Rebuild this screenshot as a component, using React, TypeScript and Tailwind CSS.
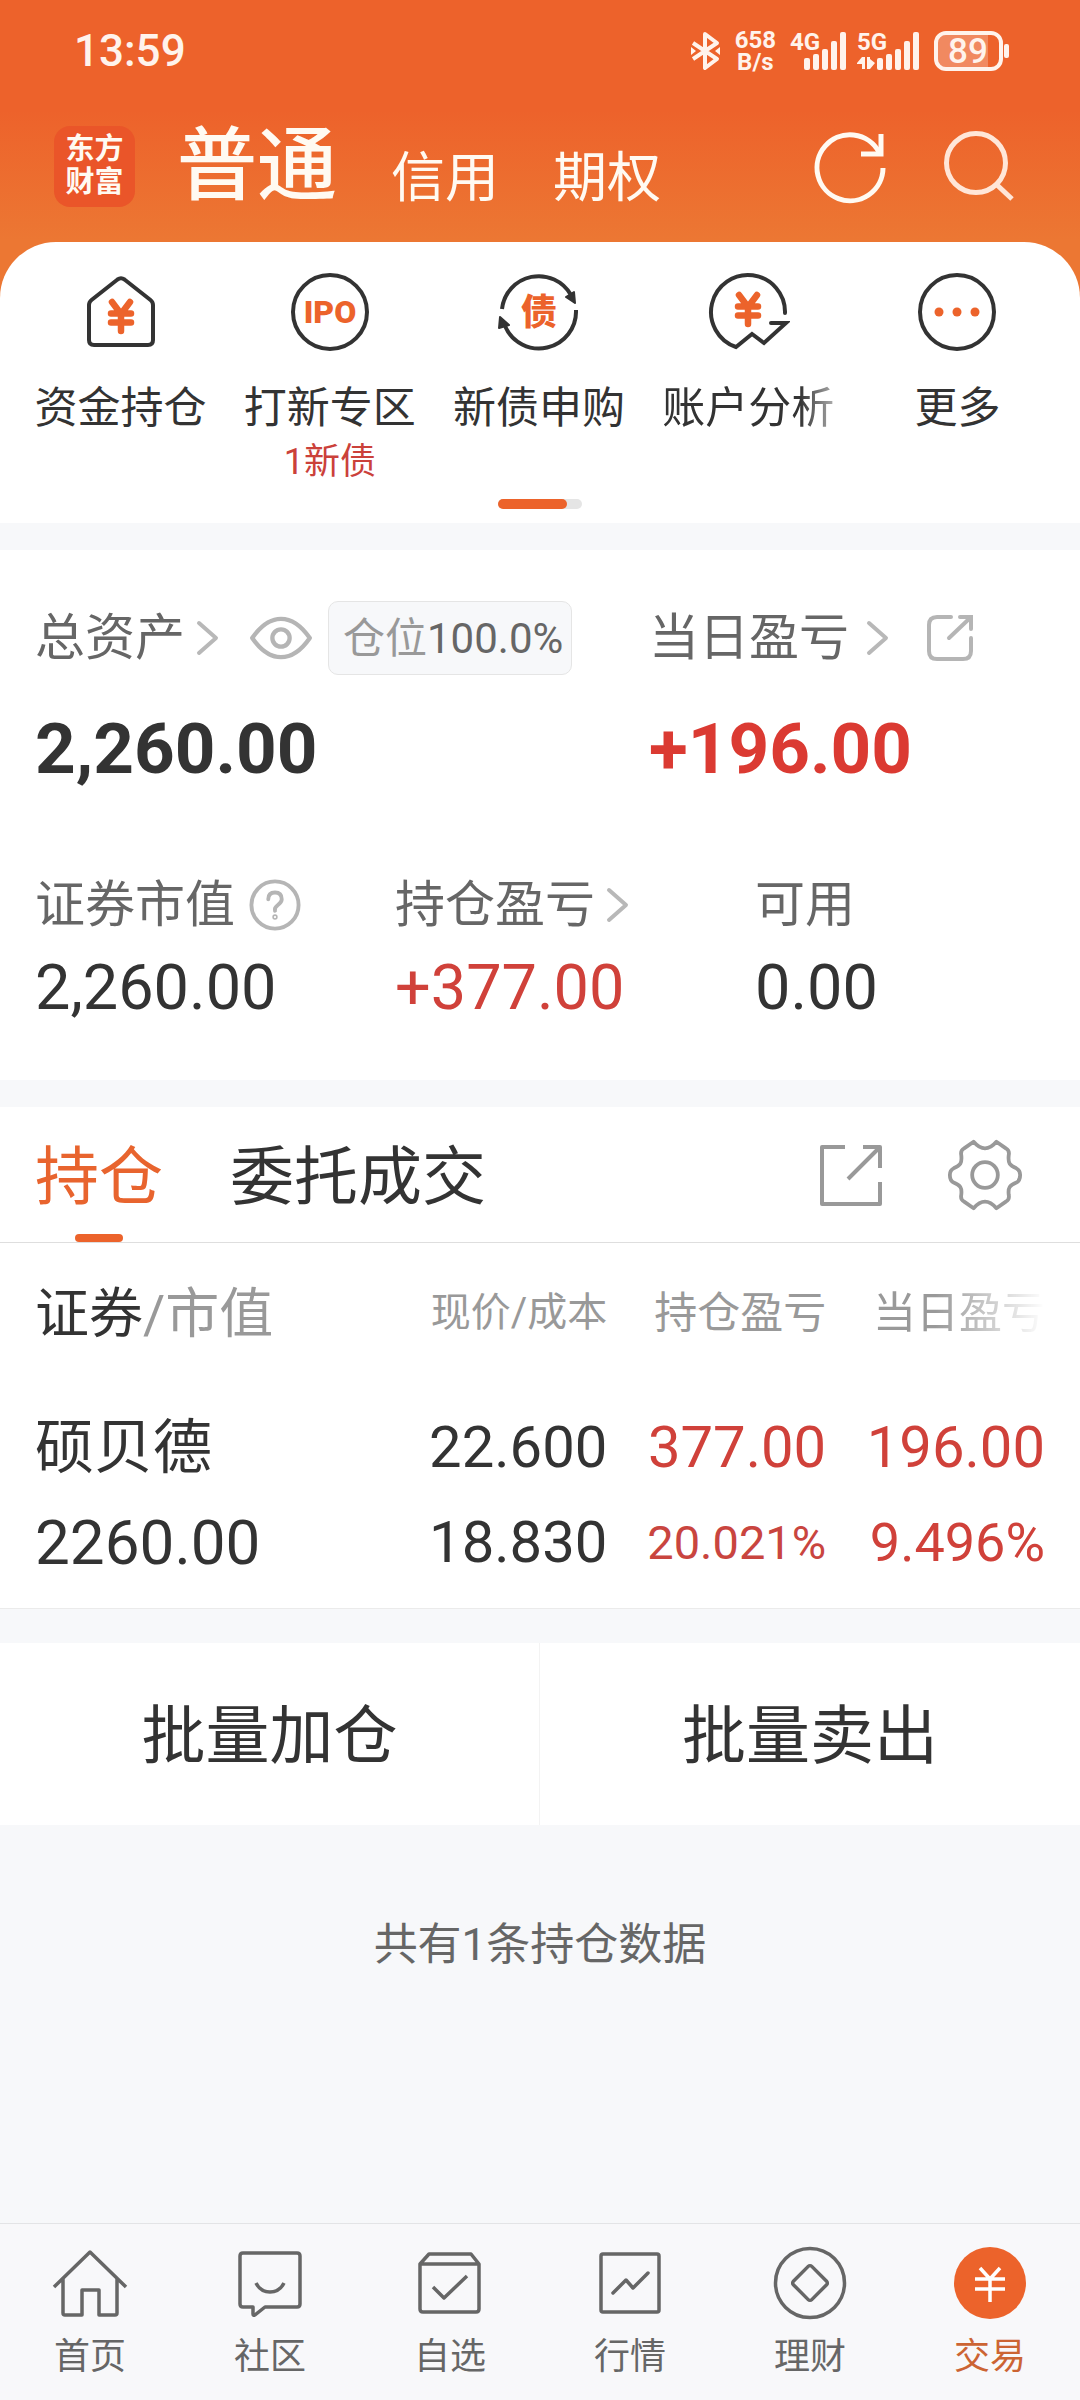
import type { ReactNode } from "react";

/* Shared icons */

const Yen = ({ y = 0 }: { y?: number }) => (
  <path
    d="M33 32L42 44L51 32M42 44V61M32 43.500H52M32 52.500H52"
    transform={`translate(0 ${y})`}
    stroke="#ec632b"
    strokeWidth="6.500"
    strokeLinecap="round"
    strokeLinejoin="round"
  />
);

const QuickSvg = ({ children }: { children: ReactNode }) => (
  <svg
    viewBox="0 0 84 84"
    className="size-[84px]"
    fill="none"
    stroke="#333"
    strokeWidth="4"
    aria-hidden="true"
  >
    {children}
  </svg>
);

const NavSvg = ({ children }: { children: ReactNode }) => (
  <svg
    viewBox="0 0 80 80"
    className="size-20"
    fill="none"
    stroke="#666"
    strokeWidth="3.500"
    strokeLinejoin="round"
    aria-hidden="true"
  >
    {children}
  </svg>
);

const Chevron = () => (
  <svg
    viewBox="0 0 24 40"
    className="h-10 w-6"
    fill="none"
    stroke="#b8b8b8"
    strokeWidth="4"
    strokeLinecap="round"
    strokeLinejoin="round"
    aria-hidden="true"
  >
    <path d="M4 5L21 20L4 35" />
  </svg>
);

const quickItems = [
  {
    label: "资金持仓",
    icon: (
      <QuickSvg>
        <path d="M10 35Q10 32 12.500 30L38.500 9.500Q42 7 45.500 9.500L71.500 30Q74 32 74 35V70Q74 75 69 75H15Q10 75 10 70Z" />
        <Yen />
      </QuickSvg>
    ),
  },
  {
    label: "打新专区",
    note: "1新债",
    icon: (
      <QuickSvg>
        <circle cx="42" cy="42" r="37" />
        <text
          x="42"
          y="53"
          textAnchor="middle"
          fontSize="32"
          fontWeight="900"
          fill="#ec632b"
          stroke="none"
        >
          IPO
        </text>
      </QuickSvg>
    ),
  },
  {
    label: "新债申购",
    icon: (
      <QuickSvg>
        <path d="M5 39A37 37 0 0 1 74 25M79 40A37 37 0 0 1 8 56" />
        <path
          d="M69 27L77 22L78 33ZM3 47L12 55L2 58Z"
          fill="#333"
          strokeWidth="2"
          strokeLinejoin="round"
        />
        <text
          x="42"
          y="55"
          textAnchor="middle"
          fontSize="36"
          fontWeight="900"
          fill="#ec632b"
          stroke="none"
        >
          债
        </text>
      </QuickSvg>
    ),
  },
  {
    label: "账户分析",
    fade: true,
    icon: (
      <QuickSvg>
        <path
          d="M79 43A37 37 0 1 0 30 77L46 64L58 73L80 53H65"
          strokeLinecap="round"
        />
        <Yen y={-7} />
      </QuickSvg>
    ),
  },
  {
    label: "更多",
    icon: (
      <QuickSvg>
        <circle cx="42" cy="42" r="37" />
        <g fill="#ec632b" stroke="none">
          <circle cx="24" cy="42" r="4.500" />
          <circle cx="42" cy="42" r="4.500" />
          <circle cx="60" cy="42" r="4.500" />
        </g>
      </QuickSvg>
    ),
  },
];

const navItems = [
  {
    label: "首页",
    icon: (
      <NavSvg>
        <path d="M4 44L40 9L76 44M13 36V70Q13 72 15 72H32V47H49V72H65Q67 72 67 70V36" />
      </NavSvg>
    ),
  },
  {
    label: "社区",
    icon: (
      <NavSvg>
        <path d="M13 10H67Q70 10 70 13V61Q70 64 67 64H35L25 72Q23 73 23 71V64H13Q10 64 10 61V13Q10 10 13 10Z" />
        <path d="M26 40C32 52 48 52 54 40" />
      </NavSvg>
    ),
  },
  {
    label: "自选",
    icon: (
      <NavSvg>
        <path d="M10 21L19 11H61L69 21V66Q69 69 66 69H13Q10 69 10 66ZM10 21H69M23 44L34 55L57 33" />
      </NavSvg>
    ),
  },
  {
    label: "行情",
    icon: (
      <NavSvg>
        <rect x="11" y="11" width="58" height="58" rx="2" />
        <path d="M23 50L36 37L43 45L58 30" strokeLinecap="round" />
      </NavSvg>
    ),
  },
  {
    label: "理财",
    icon: (
      <NavSvg>
        <circle cx="40" cy="40" r="34.500" />
        <rect
          x="27"
          y="27"
          width="26"
          height="26"
          rx="2.500"
          transform="rotate(45 40 40)"
        />
      </NavSvg>
    ),
  },
  {
    label: "交易",
    active: true,
    icon: (
      <NavSvg>
        <circle cx="40" cy="40" r="36" fill="#ec632b" stroke="none" />
        <path
          d="M30 25L40 36L50 25M40 36V59M25 36H55M25 46H55"
          stroke="#fff"
        />
      </NavSvg>
    ),
  },
];

const StatusBar = () => (
  <div className="flex h-[102px] items-center justify-between pr-[68px] pl-[74px] text-[#fff3ec]">
    <span className="text-[44px] leading-[44px] font-medium">13:59</span>
    <div className="flex items-center">
      {/* Bluetooth */}
      <svg
        viewBox="0 0 32 40"
        className="h-10 w-8"
        fill="none"
        stroke="currentColor"
        strokeWidth="4"
        strokeLinejoin="round"
        aria-hidden="true"
      >
        <path d="M4 12L28 28L16 37V3L28 12L4 28" />
        <path d="M2 16L7 20L2 24ZM31 16L26 20L31 24Z" fill="currentColor" stroke="none" />
      </svg>
      <div className="ml-[14px] text-center text-[24px] leading-[22px] font-bold">
        <p>658</p>
        <p>B/s</p>
      </div>
      {/* Signal */}
      <svg
        viewBox="0 0 132 40"
        className="ml-[14px] h-10 w-[132px] overflow-visible"
        fill="currentColor"
        aria-hidden="true"
      >
        <text x="0" y="19" fontSize="24" fontWeight="700">
          4G
        </text>
        <rect x="14" y="27" width="6" height="12" rx="2" />
        <rect x="23" y="23" width="6" height="16" rx="2" />
        <rect x="32" y="18" width="6" height="21" rx="2" />
        <rect x="41" y="10" width="6" height="29" rx="2" />
        <rect x="50" y="1" width="6" height="38" rx="2" />
        <text x="67" y="19" fontSize="24" fontWeight="700">
          5G
        </text>
        <path d="M67 32L72 26H75V38H72V33H67ZM77 26H80V28L85 32L80 38H77Z" />
        <rect x="87" y="27" width="6" height="12" rx="2" />
        <rect x="96" y="23" width="6" height="16" rx="2" />
        <rect x="105" y="18" width="6" height="21" rx="2" />
        <rect x="114" y="10" width="6" height="29" rx="2" />
        <rect x="123" y="1" width="6" height="38" rx="2" />
      </svg>
      {/* Battery */}
      <svg viewBox="0 0 78 40" className="ml-3 h-10 w-[78px]" aria-hidden="true">
        <path d="M12 4H54V36H12Q4 36 4 28V12Q4 4 12 4Z" fill="#fff" fillOpacity="0.25" />
        <rect
          x="2"
          y="2"
          width="65"
          height="36"
          rx="10"
          fill="none"
          stroke="currentColor"
          strokeWidth="4"
        />
        <rect x="70" y="13" width="5" height="14" rx="2" fill="currentColor" />
        <text
          x="34"
          y="32"
          textAnchor="middle"
          fontSize="35"
          fontWeight="500"
          fill="currentColor"
        >
          89
        </text>
      </svg>
    </div>
  </div>
);

const Header = () => (
  <header className="flex h-[140px] items-center pr-[62px] pb-3 pl-[54px] text-[#fffaf2]">
    <div className="flex size-[81px] flex-col items-center justify-center rounded-2xl bg-[#ea5529] text-[29px] leading-[33px] font-bold">
      <span>东方</span>
      <span>财富</span>
    </div>
    <nav className="ml-[42px] flex flex-1 items-end">
      <button className="text-[80px] leading-[80px] font-medium">普通</button>
      <button className="ml-[54px] text-[54px] leading-[54px]">信用</button>
      <button className="ml-[54px] text-[54px] leading-[54px]">期权</button>
    </nav>
    <button aria-label="刷新">
      <svg viewBox="0 0 80 80" className="size-20" fill="none" stroke="currentColor" strokeWidth="5">
        <path d="M73 42A33 33 0 1 1 69 26" />
        <path d="M71 8V28H51" />
      </svg>
    </button>
    <button className="ml-12" aria-label="搜索">
      <svg viewBox="0 0 80 80" className="size-20" fill="none" stroke="#ffe6d8" strokeWidth="5">
        <circle cx="38" cy="37" r="29.500" />
        <path d="M58 58L74 73" />
      </svg>
    </button>
  </header>
);

const QuickMenu = () => (
  <section className="rounded-t-[56px] bg-white pt-7 pb-[14px]">
    <div className="grid grid-cols-5 pr-[18px] pl-4">
      {quickItems.map((item) => (
        <button key={item.label} className="flex h-[216px] flex-col items-center">
          {item.icon}
          <span
            className={
              item.fade
                ? "mt-6 text-[43px] leading-[60px] [mask-image:linear-gradient(to_right,black_80%,#0006_100%)]"
                : "mt-6 text-[43px] leading-[60px]"
            }
          >
            {item.label}
          </span>
          {item.note && (
            <span className="text-[36px] leading-[48px] text-[#cb413a]">{item.note}</span>
          )}
        </button>
      ))}
    </div>
    {/* Page indicator */}
    <div className="mx-auto mt-[13px] h-[10px] w-[84px] rounded-full bg-[#e5e5e5]">
      <div className="h-full w-[69px] rounded-full bg-[#ec632b]" />
    </div>
  </section>
);

const Assets = () => (
  <section className="mt-[27px] bg-white px-[35px] pt-[51px] pb-[57px] text-[50px] text-[#666]">
    <div className="grid grid-cols-[614fr_396fr]">
      <div>
        <div className="flex h-[74px] items-center">
          <button className="flex items-center gap-[10px]">
            总资产
            <Chevron />
          </button>
          <button className="ml-[30px]" aria-label="隐藏金额">
            <svg viewBox="0 0 66 50" className="h-12 w-16" fill="none" stroke="#b5b5b5" strokeWidth="4.500" strokeLinejoin="round">
              <path d="M3 25C12 12 21 5 33 5S54 12 63 25C54 38 45 45 33 45S12 38 3 25Z" />
              <circle cx="33" cy="25" r="9" />
            </svg>
          </button>
          <span className="ml-[15px] flex h-[74px] items-center rounded-[10px] border border-[#e5e5e5] bg-[#f7f8fa] pr-2 pl-[14px] text-[42px] whitespace-nowrap">
            <span className="text-[#999]">仓位</span>100.0%
          </span>
        </div>
        <p className="mt-[34px] text-[71px] leading-[80px] font-bold text-[#333]">2,260.00</p>
      </div>
      <div>
        <div className="flex h-[74px] items-center">
          <button className="flex items-center gap-4">
            当日盈亏
            <Chevron />
          </button>
          <button className="ml-9" aria-label="分享">
            <svg viewBox="0 0 50 50" className="size-[50px]" fill="none" stroke="#b5b5b5" strokeWidth="4" strokeLinecap="round">
              <path d="M26 4H12Q4 4 4 12V38Q4 46 12 46H38Q46 46 46 38V25M35 4H46V16M45 5L24 25" />
            </svg>
          </button>
        </div>
        <p className="mt-[34px] text-[71px] leading-[80px] font-bold text-[#db3a32]">+196.00</p>
      </div>
    </div>

    <div className="mt-[86px] grid grid-cols-[360fr_360fr_290fr]">
      <div>
        <div className="flex h-[60px] items-center gap-[14px]">
          证券市值
          <button aria-label="说明">
            <svg viewBox="0 0 54 54" className="size-[52px]" fill="none" stroke="#b5b5b5" strokeWidth="4" strokeLinecap="round">
              <circle cx="27" cy="27" r="24.500" />
              <path d="M20 21Q20 14 27 14T34 21Q34 24 30 27T27 33" />
              <circle cx="27" cy="39.500" r="0.800" />
            </svg>
          </button>
        </div>
        <p className="mt-[18px] text-[63px] leading-[70px] text-[#333]">2,260.00</p>
      </div>
      <div>
        <button className="flex h-[60px] items-center gap-[10px]">
          持仓盈亏
          <Chevron />
        </button>
        <p className="mt-[18px] text-[63px] leading-[70px] text-[#d0413a]">+377.00</p>
      </div>
      <div>
        <div className="flex h-[60px] items-center">可用</div>
        <p className="mt-[18px] text-[63px] leading-[70px] text-[#333]">0.00</p>
      </div>
    </div>
  </section>
);

const Holdings = () => (
  <section className="mt-[27px] border-b border-[#ebebeb] bg-white">
    <div className="flex h-[136px] items-center border-b border-[#dedede] pr-[57px] pl-[35px] text-[64px]">
      <button className="relative h-full pt-[6px] text-[#e8642e]">
        持仓
        <span className="absolute bottom-0 left-1/2 h-2 w-12 -translate-x-1/2 rounded-sm bg-[#ec632b]" />
      </button>
      <button className="ml-[67px] flex-1 pt-[6px] text-left">委托成交</button>
      <button aria-label="分享持仓">
        <svg viewBox="0 0 64 64" className="size-16" fill="none" stroke="#999" strokeWidth="4" strokeLinejoin="round">
          <path d="M26 4H3V61H61V39M44 4H61V25M61 4L29 36" />
        </svg>
      </button>
      <button className="ml-16" aria-label="设置">
        <svg viewBox="0 0 80 80" className="size-[76px]" fill="none" stroke="#999" strokeWidth="4" strokeLinejoin="round">
          <path d="M28 5Q40 19 52 5L62 12Q66 14 65 19C64 28 66 30 73 33Q77 35 77 40Q77 46 73 48C66 51 64 53 65 61Q66 66 62 68L52 75Q40 61 28 75L18 68Q14 66 15 61C16 53 14 51 7 48Q3 46 3 40Q3 35 7 33C14 30 16 28 15 19Q14 14 18 12Z" />
          <circle cx="40" cy="40" r="13.500" />
        </svg>
      </button>
    </div>

    <div className="px-[35px] pb-[18px]">
      <table className="w-full table-fixed text-right whitespace-nowrap">
        <thead>
          <tr className="h-[136px] text-[43px] text-[#999]">
            <th className="w-[35%] pt-[6px] text-left text-[54px] font-normal">
              <span className="text-[#333]">证券</span>/市值
            </th>
            <th className="pt-1 text-[40px] font-normal">现价/成本</th>
            <th className="pt-1 font-normal">持仓盈亏</th>
            <th className="pt-1 font-normal [mask-image:linear-gradient(to_right,black_50%,transparent_100%)]">
              当日盈亏
            </th>
          </tr>
        </thead>
        <tbody className="text-[58px]">
          <tr className="h-[116px] align-bottom leading-[95px]">
            <td className="text-left text-[59px]">硕贝德</td>
            <td>22.600</td>
            <td className="text-[#d0413a]">377.00</td>
            <td className="text-[#d0413a]">196.00</td>
          </tr>
          <tr className="h-[95px] leading-[95px]">
            <td className="text-left text-[62px]">2260.00</td>
            <td>18.830</td>
            <td className="text-[47px] text-[#c9453f]">20.021%</td>
            <td className="text-[54px] text-[#d0413a]">9.496%</td>
          </tr>
        </tbody>
      </table>
    </div>
  </section>
);

const App = () => {
  return (
    <main className="flex min-h-screen flex-col bg-[#f7f8fa] font-[Roboto,'Noto_Sans_CJK_SC',sans-serif] text-[#333]">
      <div className="bg-[linear-gradient(#ed622b_110px,#ec7733_240px)]">
        <StatusBar />
        <Header />
        <QuickMenu />
      </div>

      <Assets />
      <Holdings />

      {/* Batch actions */}
      <div className="mt-[34px] grid h-[182px] grid-cols-2 bg-white text-[64px]">
        <button className="border-r border-[#f3f3f3] pt-[6px]">批量加仓</button>
        <button className="pt-[6px]">批量卖出</button>
      </div>

      <p className="mt-[88px] mb-10 text-center text-[44px] leading-[64px] text-[#666]">
        共有1条持仓数据
      </p>

      {/* Bottom navigation */}
      <nav className="mt-auto grid grid-cols-6 border-t border-[#e3e4e6] bg-[#f8f8fa] pt-[19px] pb-[21px]">
        {navItems.map((item) => (
          <a
            key={item.label}
            href="#"
            className={
              item.active
                ? "flex flex-col items-center gap-3 text-[36px] leading-[44px] text-[#cc6433]"
                : "flex flex-col items-center gap-3 text-[36px] leading-[44px] text-[#666]"
            }
          >
            {item.icon}
            {item.label}
          </a>
        ))}
      </nav>
    </main>
  );
};

export default App;
